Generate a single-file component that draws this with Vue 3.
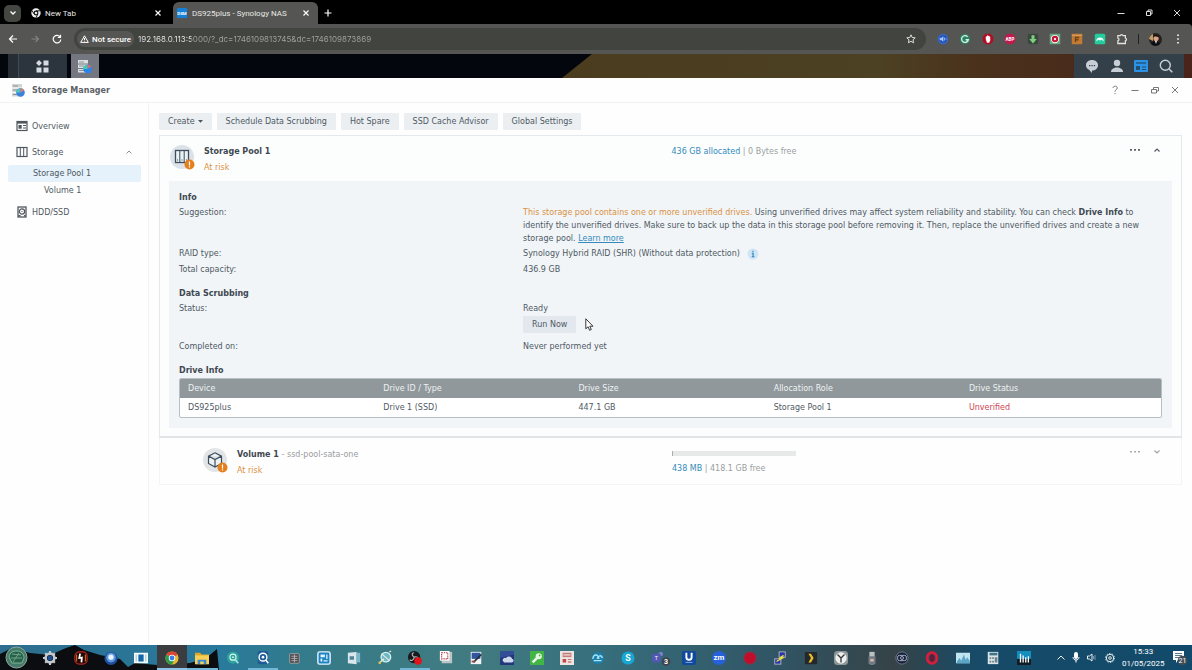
<script setup>
import { ref } from 'vue'

const url = ref('192.168.0.113:5000/?_dc=1746109813745&dc=1746109873869')

const tools = ['Schedule Data Scrubbing', 'Hot Spare', 'SSD Cache Advisor', 'Global Settings']
const columns = ['Device', 'Drive ID / Type', 'Drive Size', 'Allocation Role', 'Drive Status']

const extensions = [
  { name: 'Assistant', art: '<circle cx="8" cy="8" r="7" fill="#3565c9"/><circle cx="8" cy="8" r="5" fill="#2450b4"/><path d="M4 7h2l2-2v6L6 9H4zM10 6v4M12 7v2" fill="#a9c9ff" stroke="#a9c9ff" stroke-width="1"/>' },
  { name: 'Grammar', art: '<circle cx="8" cy="8" r="7" fill="#2f8263"/><path d="M11.500 5.200A4.500 4.500 0 1 0 12.400 9H8.800" fill="none" stroke="#d8efe5" stroke-width="1.700"/>' },
  { name: 'Blocker', art: '<path d="M5 1h6l4 4v6l-4 4H5l-4-4V5z" fill="#b30d25"/><path d="M5 8V5h1V4h1V3h1.300v1H10v1h1v5l-1.500 3h-3z" fill="#fff"/>' },
  { name: 'ABP', art: '<path d="M5 1h6l4 4v6l-4 4H5l-4-4V5z" fill="#c21a4c"/><text x="8" y="10.400" font-size="6" font-weight="700" text-anchor="middle" fill="#fff">ABP</text>' },
  { name: 'Downloader', art: '<rect x="1" y="1" width="14" height="14" rx="3" fill="#39473f"/><path d="M6 3h4v5h3l-5 6-5-6h3z" fill="#7fd07c"/>' },
  { name: 'Recorder', art: '<rect x="1" y="1" width="14" height="14" fill="#68a885"/><circle cx="8" cy="8" r="5.500" fill="#fff"/><circle cx="8" cy="8" r="4.300" fill="#c4173a"/><circle cx="8" cy="8" r="1.500" fill="#fff"/>' },
  { name: 'Notes', art: '<rect x="1" y="1" width="14" height="14" rx="1" fill="#c27b32"/><path d="M1 3h14" stroke="#e4ae72"/><path d="M6 12V6h5M6 9h4" stroke="#70411a" stroke-width="1.800" fill="none"/>' },
  { name: 'VPN', art: '<rect x="1" y="1" width="14" height="14" rx="2" fill="#23cda0"/><path d="M3 11a5 5 0 0 1 10 0l-3-2-2 1-2-1z" fill="#e9fff7"/>' },
  { name: 'Extensions', art: '<path d="M2.500 3.500h3.200a1.900 1.900 0 0 1 3.700 0h3.100v3.300a1.900 1.900 0 0 1 0 3.700v3.500h-10v-3.500a1.900 1.900 0 0 0 0-3.700z" fill="none" stroke="#e3e3e0" stroke-width="1.700"/>' }
]

const apps = [
  { name: 'Settings', art: '<circle cx="8" cy="8" r="5" fill="none" stroke="#c4c9cf" stroke-width="3"/><path d="M8 0v3M8 13v3M0 8h3M13 8h3M2.500 2.500l2 2M11.500 11.500l2 2M2.500 13.500l2-2M11.500 4.500l2-2" stroke="#c4c9cf" stroke-width="2.400"/><circle cx="8" cy="8" r="3" fill="#1d4f91"/>' },
  { name: 'Nero', art: '<rect x="1" y="1" width="14" height="14" rx="5" fill="#250808" stroke="#b3261d" stroke-width="1.500"/><path d="M7 3L6 8l3-.5L8.500 13" stroke="#fff" stroke-width="2" fill="none"/><path d="M3 4v8M13 4v8" stroke="#e08b26"/>' },
  { name: 'Player', art: '<circle cx="8" cy="8.500" r="7.500" fill="#1d4f9b"/><circle cx="8" cy="7.500" r="5.500" fill="#5d97dd"/><circle cx="8" cy="7" r="3" fill="#e9f4ff"/>' },
  { name: 'Task view', art: '<rect x="0" y="2" width="16" height="12" fill="#f3f8fb"/><rect x="5" y="4" width="6" height="8" fill="#1167a7"/><path d="M2.500 4v8M13.500 4v8" stroke="#8fb8cf"/>' },
  { name: 'Chrome', state: 'focused', art: '<circle cx="8" cy="8" r="7.500" fill="#e9b82c"/><path d="M8 8L1.500 4.200A7.500 7.500 0 0 1 14.500 4.200z" fill="#dd4437"/><path d="M8 8L1.500 4.200A7.500 7.500 0 0 0 8 15.500L11 9.700z" fill="#2b9c4d"/><circle cx="8" cy="8" r="3.700" fill="#fff"/><circle cx="8" cy="8" r="2.800" fill="#3b7fe8"/>' },
  { name: 'File Explorer', state: 'running', art: '<path d="M0 2h6l1.500 2H16v11H0z" fill="#e0a526"/><path d="M0 5h16v10H0z" fill="#f6cf57"/><path d="M3 10h10v5H3z" fill="#3a88cf"/><path d="M6 12h4v3H6z" fill="#f6cf57"/>' },
  { name: 'Finder', art: '<circle cx="8" cy="7.500" r="7" fill="#2da39c"/><circle cx="8" cy="7" r="3.500" fill="none" stroke="#d9f6f0" stroke-width="1.300"/><path d="M10 9l4 5" stroke="#9de3db" stroke-width="2"/><circle cx="8" cy="7" r="1" fill="#d9f6f0"/>' },
  { name: 'Disk search', state: 'running', art: '<rect x="2" y="0" width="12" height="15" rx="2" fill="#1e5c97"/><circle cx="8" cy="7" r="4.500" fill="#1e5c97" stroke="#fff" stroke-width="1.600"/><circle cx="8" cy="7" r="1.500" fill="#fff"/><path d="M11 10l3 4" stroke="#fff" stroke-width="1.600"/>' },
  { name: 'Archive', art: '<rect x="3" y="3" width="11" height="11" rx="1" fill="#4c4a4e" stroke="#a5a5a5"/><path d="M5 6h7M5 8.500h7M5 11h7M8.500 4v9" stroke="#bdb7b5"/>' },
  { name: 'Layout', art: '<rect x="1" y="1" width="14" height="14" rx="2" fill="#1d83c1" stroke="#e8f5ff" stroke-width="1.600"/><path d="M4 4h5v3H4zM10.500 4H12v5h-1.500zM4 8.500h2V12H4zM7.500 10.500H12V12H7.500z" fill="#dff2ff"/>' },
  { name: 'Mail', art: '<path d="M1 2l10-1v14L1 14z" fill="#d9e6ea"/><path d="M11 2h4v11h-4z" fill="#79b6cc"/><path d="M3 6h5v4H3z" fill="#4d8299"/>' },
  { name: 'Sync', art: '<circle cx="9" cy="7" r="5.500" fill="#6bb7c9" stroke="#d5eef1" stroke-width="1.500"/><path d="M1 14l6-5M13 1l2-1M4 3l9 8" stroke="#e8ead3" stroke-width="1.500"/><circle cx="2" cy="13.500" r="1.500" fill="#dac247"/>' },
  { name: 'OBS Studio', state: 'running', art: '<circle cx="7" cy="7" r="7" fill="#17191c"/><path d="M7 7C4 5 4 2 7 2M7 7c3-1 5 0 5 3M7 7c0 3-3 5-5 3" stroke="#b7babd" stroke-width="1.300" fill="none"/><circle cx="11.500" cy="11.500" r="4.300" fill="#e3141a"/>' },
  { name: 'Snipping tool', art: '<rect x="3" y="1" width="12" height="13" fill="#bcc4c7"/><rect x="1" y="0" width="11" height="11" fill="#fff"/><rect x="3" y="2" width="7" height="7" fill="none" stroke="#b53540" stroke-width="1.300" stroke-dasharray="1.500 1"/>' },
  { name: 'Editor', art: '<rect x="2" y="1" width="12" height="14" fill="#f1f3f7"/><rect x="3" y="2" width="10" height="7" fill="#31569e"/><path d="M5 13l9-9" stroke="#272a37" stroke-width="2"/><path d="M3 12h4" stroke="#9b4949" stroke-width="2"/>' },
  { name: 'Cloud drive', art: '<rect x="0" y="0" width="16" height="16" fill="#334d96"/><path d="M0 16V8l16-4v12z" fill="#24377a"/><path d="M3 11a3 3 0 0 1 4-3 4 4 0 0 1 7 1 2 2 0 0 1-1 4H5z" fill="#ccd8ec"/>' },
  { name: 'Keys', art: '<rect x="0" y="0" width="16" height="16" fill="#42b545"/><circle cx="10" cy="6" r="3.500" fill="#e7f5e6"/><path d="M3 13l6-6" stroke="#e7f5e6" stroke-width="3"/><circle cx="11" cy="5" r="1" fill="#42b545"/>' },
  { name: 'Calendar', art: '<rect x="0" y="0" width="16" height="16" fill="#eee4e2"/><path d="M3 2h10v5H3z" fill="#c37e7b"/><path d="M3 9h4v4H3zM9 9h4v1H9zM9 12h4v1H9z" fill="#bd4948"/><path d="M4 4.500h8" stroke="#fff"/>' },
  { name: 'Link', art: '<circle cx="8" cy="8" r="7" fill="#1c7fac"/><path d="M2 9c1-6 6-6 7 0M7 9c1-4 5-5 6-1M3 11h9" stroke="#a8e4fa" fill="none" stroke-width="1.600"/>' },
  { name: 'Skype', art: '<circle cx="8" cy="8" r="7.500" fill="#16a7d2"/><text x="8" y="11.500" font-size="10" font-weight="700" text-anchor="middle" fill="#fff">S</text>' },
  { name: 'Teams', art: '<circle cx="10" cy="3.500" r="2.500" fill="#8185d3"/><rect x="0" y="3" width="10" height="10" rx="1" fill="#5358b1"/><text x="5" y="10" font-size="6" text-anchor="middle" fill="#fff">T</text><circle cx="16" cy="12" r="5" fill="#3d444e"/><text x="16" y="15" font-size="8" font-weight="700" text-anchor="middle" fill="#fff">3</text>' },
  { name: 'UniFi', art: '<rect x="0" y="0" width="16" height="16" rx="2" fill="#114a9c"/><path d="M5 2v5a3 3 0 0 0 6 0V2" fill="none" stroke="#fff" stroke-width="2.200"/><path d="M4 13h8" stroke="#8eb5e8"/>' },
  { name: 'Zoom', art: '<circle cx="8" cy="8" r="8" fill="#2461da"/><text x="8" y="10.800" font-size="9" font-weight="700" text-anchor="middle" fill="#fff">zm</text>' },
  { name: 'Screen recorder', art: '<circle cx="8" cy="8" r="7" fill="#c00d2b" stroke="#8d3443"/>' },
  { name: 'PuTTY', art: '<rect x="7" y="1" width="7" height="6" fill="#2835a2" stroke="#b9bdca"/><rect x="2" y="9" width="7" height="6" fill="#2835a2" stroke="#b9bdca"/><path d="M12 5L8 8h3l-7 4" stroke="#efe044" stroke-width="1.500" fill="none"/>' },
  { name: 'Plex', art: '<rect x="1" y="1" width="14" height="14" rx="1" fill="#25282b"/><path d="M5 3h3l3 5-3 5H5l3-5z" fill="#e9bd25"/>' },
  { name: 'Clock', art: '<rect x="0" y="0" width="16" height="16" rx="4" fill="#8f9697"/><circle cx="8" cy="8" r="6.500" fill="#edefed"/><path d="M4 4l4 4 4-4M8 8v5" stroke="#343839" stroke-width="1.500" fill="none"/>' },
  { name: 'USB drive', art: '<path d="M5 1h6v6H5z" fill="#bbc0c3"/><path d="M4 6h8v8l-2 2H6l-2-2z" fill="#737b82"/><rect x="6" y="9" width="4" height="3" fill="#d6b5ae"/>' },
  { name: 'Camera', art: '<circle cx="8" cy="8" r="7" fill="#17223a" stroke="#747e91"/><rect x="3" y="5" width="10" height="6" rx="2" fill="none" stroke="#b4c0d3"/><circle cx="8" cy="8" r="1.700" fill="none" stroke="#b4c0d3"/>' },
  { name: 'Opera', art: '<ellipse cx="8" cy="8" rx="5.500" ry="6" fill="none" stroke="#d51e3c" stroke-width="3.300"/><ellipse cx="8" cy="8" rx="2.300" ry="4.500" fill="#641b36"/>' },
  { name: 'Monitor', art: '<rect x="0" y="2" width="16" height="12" fill="#c1e4f1"/><path d="M1 12l3-4 2 3 3-7 2 6 2-3 3 5v2H1z" fill="#5ba5c6"/>' },
  { name: 'Calculator', art: '<rect x="2" y="1" width="12" height="14" fill="#dae3e5"/><path d="M4 2h9v3H4z" fill="#427488"/><path d="M4 7h2v2H4zM7 7h2v2H7zM4 11h2v2H4zM7 11h2v2H7zM10 7h3v6h-3z" fill="#68838e"/>' },
  { name: 'Audio', art: '<rect x="0" y="0" width="16" height="16" fill="#158dbd"/><path d="M0 9h16v7H0z" fill="#111c24"/><path d="M4 3v10M7 5v8M10 7v6M13 6v7" stroke="#fff" stroke-width="1.500"/>' }
]
</script>

<template>
  <div class="screen">
    <header class="browser">
      <div class="tabs">
        <button class="tab-search" aria-label="Search tabs">
          <svg width="6" height="4" viewBox="0 0 6 4"><path d="M.5.5L3 3 5.500.5" fill="none" stroke="#fff" stroke-width="1.300" /></svg>
        </button>
        <div class="tab">
          <svg width="10" height="10" viewBox="0 0 16 16"><circle cx="8" cy="8" r="7.500" fill="#eee" /><circle cx="8" cy="8" r="3" fill="#eee" stroke="#111" stroke-width="1.800" /><path d="M8 4.500h7M5 9.500L1.500 4M11 9.500L8 15.500" stroke="#111" stroke-width="1.500" /></svg>
          <span class="tab-title">New Tab</span>
          <button aria-label="Close New Tab"><svg width="6" height="6" viewBox="0 0 6 6"><path d="M.5.5l5 5M5.500.5l-5 5" stroke="#fff" stroke-width="1.100" /></svg></button>
        </div>
        <div class="tab active">
          <svg width="10" height="10" viewBox="0 0 16 16"><rect width="16" height="16" rx="1" fill="#1580d8" /><text x="8" y="10.500" font-size="7" font-weight="700" text-anchor="middle" fill="#fff">DSM</text></svg>
          <span class="tab-title">DS925plus - Synology NAS</span>
          <button aria-label="Close DS925plus"><svg width="6" height="6" viewBox="0 0 6 6"><path d="M.5.5l5 5M5.500.5l-5 5" stroke="#fff" stroke-width="1.100" /></svg></button>
        </div>
        <button class="new-tab" aria-label="New tab"><svg width="8" height="8" viewBox="0 0 8 8"><path d="M4 .5v7M.5 4h7" stroke="#fff" stroke-width="1.200" /></svg></button>
        <div class="frame-controls">
          <button aria-label="Minimize"><svg width="8" height="8" viewBox="0 0 8 8"><path d="M.5 4.500h7" stroke="#ddd" /></svg></button>
          <button aria-label="Restore"><svg width="8" height="8" viewBox="0 0 8 8"><path d="M1.500 2.500h4v4h-4zM3 2.500V1h4v4H5.500" fill="none" stroke="#ddd" /></svg></button>
          <button aria-label="Close"><svg width="8" height="8" viewBox="0 0 8 8"><path d="M1 1l6 6M7 1L1 7" stroke="#ddd" /></svg></button>
        </div>
      </div>
      <div class="nav">
        <button aria-label="Back"><svg width="10" height="10" viewBox="0 0 10 10"><path d="M9 5H1.500M5 1.500L1.500 5 5 8.500" fill="none" stroke="#fff" stroke-width="1.200" /></svg></button>
        <button aria-label="Forward"><svg width="10" height="10" viewBox="0 0 10 10"><path d="M1.500 5h7M5.500 2L8.500 5l-3 3" fill="none" stroke="#858684" stroke-width="1.100" /></svg></button>
        <button aria-label="Reload"><svg width="10" height="10" viewBox="0 0 10 10"><path d="M8.300 3.200A3.800 3.800 0 1 0 8.800 5.500M8.500.8v2.700H5.800" fill="none" stroke="#fff" stroke-width="1.200" /></svg></button>
        <div class="address">
          <button class="insecure">
            <svg width="9" height="8" viewBox="0 0 9 8"><path d="M4.500.8L8.300 7.400H.7z" fill="none" stroke="#fff" /><path d="M4.500 3v2M4.500 5.700v.8" stroke="#fff" /></svg>
            Not secure
          </button>
          <input v-model="url" class="url" aria-label="Address" />
          <button class="star" aria-label="Bookmark"><svg width="10" height="10" viewBox="0 0 10 10"><path d="M5 .8l1.200 2.700 3 .3-2.200 2 .6 3L5 7.300 2.400 8.800l.6-3-2.200-2 3-.3z" fill="none" stroke="#ddd" /></svg></button>
        </div>
        <div class="extensions">
          <button v-for="e in extensions" :key="e.name" :aria-label="e.name"><svg width="12" height="12" viewBox="0 0 16 16" v-html="e.art"></svg></button>
        </div>
        <i class="divider"></i>
        <button class="avatar" aria-label="Profile"><svg width="13" height="13" viewBox="0 0 13 13"><circle cx="6.500" cy="6.500" r="6.500" fill="#27211d" /><path d="M0 6a6.500 6.500 0 0 1 4-5v7z" fill="#c09a6b" /><circle cx="7" cy="5.500" r="2.600" fill="#d9a586" /><path d="M2 11c3-4 7-4 9 0a6.500 6.500 0 0 1-9 0z" fill="#0c0d12" /><path d="M4 3c2-2 5-1 6 1z" fill="#17100e" /><path d="M6 8l1 3 1-3z" fill="#eee" /></svg></button>
        <button class="kebab" aria-label="Menu"><svg width="4" height="10" viewBox="0 0 4 10"><path d="M1.200.5h1.600v1.600H1.200zM1.200 4.200h1.600v1.600H1.200zM1.200 7.900h1.600v1.600H1.200z" fill="#fff" /></svg></button>
      </div>
    </header>

    <div class="dsm-bar">
      <svg class="wallpaper" viewBox="0 0 1192 24" preserveAspectRatio="none">
        <defs><linearGradient id="dusk"><stop offset="0" stop-color="#4b3c1e" /><stop offset=".5" stop-color="#4c4123" /><stop offset=".65" stop-color="#4a321c" /><stop offset="1" stop-color="#49231a" /></linearGradient></defs>
        <path d="M0 0h1192v24H0z" fill="#04060d" /><path d="M592 0h600v24H562z" fill="url(#dusk)" />
      </svg>
      <button class="main-menu" aria-label="Main Menu"><svg width="13" height="13" viewBox="0 0 13 13"><path d="M3 0l3 3-3 3-3-3zM7.500.5h5v5h-5zM.5 7.500h5v5h-5zM7.500 7.500h5v5h-5z" fill="#d6dbe2" /></svg></button>
      <button class="open-app" aria-label="Storage Manager">
        <svg width="14" height="15" viewBox="0 0 14 15"><path d="M0 1h10v3.500H0zM0 5.500h10V9H0zM0 10h10v3.500H0z" fill="#dce0e2" /><path d="M1 3h5M1 7h5M1 11.500h5" stroke="#8c9296" /><circle cx="9.500" cy="10" r="4.300" fill="#2786ec" /><path d="M9.500 10V5.700A4.300 4.300 0 0 0 5.200 10z" fill="#3ecdb1" /><path d="M9.500 10V5.700a4.300 4.300 0 0 1 3.700 2z" fill="#d96a7a" /></svg>
      </button>
      <div class="dsm-tray">
        <button aria-label="Chat"><svg width="14" height="14" viewBox="0 0 14 14"><path d="M7 1c3.500 0 6 2.200 6 5.200S10.500 11.500 7 11.500L7 14l-3-3.200C2.200 10 1 8.300 1 6.200 1 3.200 3.500 1 7 1z" fill="#c8ced5" /><path d="M4 6h1.300v1.300H4zM6.400 6h1.300v1.300H6.400zM8.800 6h1.300v1.300H8.800z" fill="#33404b" /></svg></button>
        <button aria-label="User"><svg width="14" height="14" viewBox="0 0 14 14"><circle cx="7" cy="4" r="3.200" fill="#c8ced5" /><path d="M1 13c0-6 12-6 12 0z" fill="#c8ced5" /></svg></button>
        <button aria-label="Widgets"><svg width="14" height="14" viewBox="0 0 14 14"><rect y="1" width="14" height="12" rx="1" fill="#2a93e8" /><path d="M2 4h10" stroke="#23506f" stroke-width="1.300" /><path d="M2 7h4v4H2zM8 7.500h4v1H8zM8 10h4v1H8z" fill="#23506f" /></svg></button>
        <button aria-label="Search"><svg width="14" height="14" viewBox="0 0 14 14"><circle cx="6.300" cy="6.300" r="5" fill="none" stroke="#c8ced5" stroke-width="1.400" /><path d="M10 10l3.300 3.300" stroke="#c8ced5" stroke-width="1.500" /></svg></button>
      </div>
    </div>

    <section class="window">
      <header class="titlebar">
        <svg width="14" height="15" viewBox="0 0 14 15"><path d="M1 1h10v3.500H1zM1 5.500h10V9H1zM1 10h10v3.500H1z" fill="#d0d4d5" /><path d="M2 3h5M2 7h5M2 11.500h5" stroke="#8c9296" /><circle cx="9.500" cy="9.500" r="4.300" fill="#3b82df" /><path d="M9.500 9.500V5.200a4.300 4.300 0 0 0-4.300 4.300z" fill="#48c8c0" /><path d="M9.500 9.500V5.200a4.300 4.300 0 0 1 3.700 2z" fill="#e0796e" /></svg>
        <h1>Storage Manager</h1>
        <div class="window-controls">
          <button aria-label="Help"><svg width="8" height="10" viewBox="0 0 8 10"><path d="M2 3c0-2.500 4.300-2.300 4.300 0C6.300 4.700 4 4.500 4 6.700M4 8v1.200" fill="none" stroke="#777" /></svg></button>
          <button aria-label="Minimize"><svg width="8" height="10" viewBox="0 0 8 10"><path d="M.5 5.500h7" stroke="#777" /></svg></button>
          <button aria-label="Restore"><svg width="8" height="10" viewBox="0 0 8 10"><path d="M.5 4.500h5v3.500h-5zM2.500 4.500v-2h5V6h-2" fill="none" stroke="#777" /></svg></button>
          <button aria-label="Close"><svg width="8" height="10" viewBox="0 0 8 10"><path d="M1 2l6 6M7 2L1 8" stroke="#777" /></svg></button>
        </div>
      </header>

      <div class="body">
        <nav class="sidebar">
          <a href="#overview" class="top"><svg width="12" height="12" viewBox="0 0 12 12"><rect x="1" y="1.500" width="10" height="9" fill="none" stroke="#4f565e" stroke-width="1.200" /><path d="M1 2.700h10" stroke="#4f565e" stroke-width="1.800" /><path d="M2.500 5h3.200v3.700H2.500z" fill="#4f565e" /><path d="M7 5.500h3M7 8h3" stroke="#4f565e" /></svg>Overview</a>
          <a href="#storage" class="top"><svg width="12" height="12" viewBox="0 0 12 12"><rect x="1" y="1.500" width="10" height="9" fill="none" stroke="#4f565e" stroke-width="1.200" /><path d="M4.300 2v8M7.700 2v8" stroke="#4f565e" /></svg>Storage<svg class="caret" width="6" height="4" viewBox="0 0 6 4"><path d="M.5 3.500L3 1l2.500 2.500" fill="none" stroke="#8b9297" /></svg></a>
          <a href="#pool" class="sub selected">Storage Pool 1</a>
          <a href="#volume" class="sub nested">Volume 1</a>
          <a href="#hdd" class="top"><svg width="12" height="12" viewBox="0 0 12 12"><rect x="2" y="1" width="8" height="10" fill="none" stroke="#4f565e" stroke-width="1.300" /><circle cx="6" cy="5.500" r="2.600" fill="none" stroke="#4f565e" stroke-width="1.200" /><path d="M5.500 5h1v1h-1zM2.500 9h2v1.500h-2zM8 9h1.500v1.500H8z" fill="#4f565e" /></svg>HDD/SSD</a>
        </nav>

        <main class="main">
          <div class="toolbar">
            <button>Create <svg width="5" height="3" viewBox="0 0 5 3"><path d="M0 0h5L2.500 2.800z" fill="#4d5660" /></svg></button>
            <button v-for="t in tools" :key="t">{{ t }}</button>
          </div>

          <article class="card pool">
            <div class="card-head">
              <div class="identity">
                <svg class="badge" width="26" height="26" viewBox="0 0 26 26"><circle cx="12" cy="12" r="12" fill="#dce2e7" /><rect x="5.500" y="5.500" width="13" height="12" fill="#eaf2f6" stroke="#3d4d5c" stroke-width="1.300" /><path d="M9.800 6v11M14.200 6v11" stroke="#3d4d5c" /><path d="M7 15h1M11.500 15h1M16 15h1" stroke="#3d4d5c" /><circle cx="19.500" cy="19.500" r="5" fill="#e57f1c" /><path d="M19.500 16.500v4M19.500 21.300v1.200" stroke="#fff" stroke-width="1.200" /></svg>
                <div><h2>Storage Pool 1</h2><p class="warn">At risk</p></div>
              </div>
              <p class="usage"><span class="used">436 GB allocated</span> | 0 Bytes free</p>
              <div class="actions">
                <button aria-label="More"><svg width="10" height="4" viewBox="0 0 10 4"><path d="M0 1h2v1.700H0zM4 1h2v1.700H4zM8 1h2v1.700H8z" fill="#59616a" /></svg></button>
                <button aria-label="Collapse"><svg width="6" height="4" viewBox="0 0 6 4"><path d="M.5 3.500L3 1l2.500 2.500" fill="none" stroke="#535d65" stroke-width="1.200" /></svg></button>
              </div>
            </div>

            <div class="details">
              <h3>Info</h3>
              <dl>
                <dt>Suggestion:</dt>
                <dd class="suggestion"><span class="warn">This storage pool contains one or more unverified drives.</span> Using unverified drives may affect system reliability and stability. You can check <b>Drive Info</b> to identify the unverified drives. Make sure to back up the data in this storage pool before removing it. Then, replace the unverified drives and create a new storage pool. <a href="#learn">Learn more</a></dd>
                <dt>RAID type:</dt>
                <dd class="raid">Synology Hybrid RAID (SHR) (Without data protection)<svg width="12" height="12" viewBox="0 0 12 12"><circle cx="6" cy="6" r="5.500" fill="#cfe5f6" /><path d="M6 2.800v1.300M4.800 5.300h1.300v3.200M4.700 8.700h2.700" fill="none" stroke="#2b7fb8" stroke-width="1.100" /></svg></dd>
                <dt>Total capacity:</dt>
                <dd>436.9 GB</dd>
              </dl>
              <h3 class="spaced">Data Scrubbing</h3>
              <dl>
                <dt>Status:</dt>
                <dd>Ready</dd>
                <dt></dt>
                <dd class="run"><button>Run Now</button><svg class="cursor" width="9" height="13" viewBox="0 0 9 13"><path d="M.8.8v10l2.300-2 1.500 3.500 1.700-.8L4.800 8.200H8z" fill="#fff" stroke="#222" stroke-width=".9" /></svg></dd>
                <dt>Completed on:</dt>
                <dd>Never performed yet</dd>
              </dl>
              <h3 class="spaced">Drive Info</h3>
              <div class="table-frame">
                <table>
                  <thead><tr><th v-for="c in columns" :key="c">{{ c }}</th></tr></thead>
                  <tbody><tr><td>DS925plus</td><td>Drive 1 (SSD)</td><td>447.1 GB</td><td>Storage Pool 1</td><td class="bad">Unverified</td></tr></tbody>
                </table>
              </div>
            </div>
          </article>

          <article class="card volume">
            <div class="card-head">
              <div class="identity">
                <svg class="badge" width="26" height="26" viewBox="0 0 26 26"><circle cx="12" cy="12" r="12" fill="#e2e5e7" /><path d="M12 4.800l6.500 3.300v7.400L12 19l-6.500-3.500V8.100zM5.500 8.100l6.500 3.400 6.500-3.400M12 11.500V19" fill="#edf2f4" stroke="#3d4d5c" stroke-width="1.200" /><circle cx="19.500" cy="19.500" r="5" fill="#e57f1c" /><path d="M19.500 16.500v4M19.500 21.300v1.200" stroke="#fff" stroke-width="1.200" /></svg>
                <div><h2>Volume 1 <span>- ssd-pool-sata-one</span></h2><p class="warn">At risk</p></div>
              </div>
              <div class="usage">
                <div class="meter"><i></i></div>
                <p><span class="used">438 MB</span> | 418.1 GB free</p>
              </div>
              <div class="actions">
                <button aria-label="More"><svg width="10" height="4" viewBox="0 0 10 4"><path d="M0 1h2v1.500H0zM4 1h2v1.500H4zM8 1h2v1.500H8z" fill="#a8abad" /></svg></button>
                <button aria-label="Expand"><svg width="6" height="4" viewBox="0 0 6 4"><path d="M.5.5L3 3 5.500.5" fill="none" stroke="#a0a4a6" stroke-width="1.200" /></svg></button>
              </div>
            </div>
          </article>
        </main>
      </div>
    </section>

    <footer class="taskbar">
      <svg class="wallpaper" viewBox="0 0 1192 25" preserveAspectRatio="none">
        <defs><linearGradient id="sea"><stop offset="0" stop-color="#2d6d8d" /><stop offset=".18" stop-color="#287a9d" /><stop offset=".27" stop-color="#367b88" /><stop offset=".4" stop-color="#417b80" /><stop offset=".5" stop-color="#376f7d" /><stop offset=".65" stop-color="#315565" /><stop offset=".75" stop-color="#354347" /><stop offset=".82" stop-color="#174b68" /><stop offset="1" stop-color="#124a6b" /></linearGradient></defs>
        <path d="M0 0h1192v25H0z" fill="url(#sea)" />
        <path d="M0 9l12-6 18 5 20 2 16-7 9-3 9 5 16 5 20 4 8 8 7-4 22 2 33-2 15-4 12-10 2 21H0z" fill="#0b0d10" />
      </svg>
      <button class="start" aria-label="Start"><svg width="23" height="23" viewBox="0 0 23 23"><circle cx="11.500" cy="11.500" r="10.500" fill="#477a69" stroke="#89a99f" /><path d="M4 11c1-5 4-6 8-6s7 3 7 7l-2 5H7z" fill="#28624f" stroke="#7cb593" /><path d="M7 8l9 1M6 12h11M8 16l6-9" stroke="#6fa583" /></svg></button>
      <div class="apps">
        <button v-for="a in apps" :key="a.name" :aria-label="a.name" :class="a.state"><svg width="14" height="14" viewBox="0 0 16 16" v-html="a.art"></svg></button>
      </div>
      <div class="tray">
        <button aria-label="Hidden icons"><svg width="8" height="5" viewBox="0 0 8 5"><path d="M.5 4.500L4 1l3.500 3.500" fill="none" stroke="#eee" /></svg></button>
        <button aria-label="Microphone"><svg width="8" height="11" viewBox="0 0 8 11"><rect x="2" width="4" height="7" rx="2" fill="#fff" /><path d="M1 5c0 4 6 4 6 0M4 8v2.500" fill="none" stroke="#fff" /></svg></button>
        <button aria-label="Volume"><svg width="9" height="9" viewBox="0 0 9 9"><path d="M.5 3h2L5 1v7L2.500 6h-2z" fill="none" stroke="#fff" stroke-width=".9" /><path d="M6.500 3v3M8 2v5" stroke="#91a9b6" stroke-width=".8" /></svg></button>
        <button class="gear" aria-label="Quick settings"><svg width="10" height="10" viewBox="0 0 10 10"><circle cx="5" cy="5" r="3.700" fill="none" stroke="#e5ece8" /><circle cx="5" cy="5" r="1.300" fill="none" stroke="#e5ece8" /><circle cx="5" cy="5" r="4.500" fill="none" stroke="#e5ece8" stroke-width=".9" stroke-dasharray="1.400 1.400" /></svg></button>
        <time>15:33<br />01/05/2025</time>
        <button class="notes" aria-label="Notifications"><svg width="16" height="16" viewBox="0 0 16 16"><path d="M1 1h11v9H6l-2 3v-3H1z" fill="#fff" /><path d="M3 3.500h7M3 5.500h7M3 7.500h4" stroke="#31566a" stroke-width=".8" /><circle cx="10.500" cy="10.500" r="4.800" fill="#424c54" /><text x="10.500" y="13" font-size="7" text-anchor="middle" fill="#fff">21</text></svg></button>
      </div>
    </footer>
  </div>
</template>

<style>
body { margin: 0; background: #fefefe; }
</style>

<style scoped>
* { box-sizing: border-box; }
.screen { display: flex; flex-direction: column; height: 100vh; font-family: "DejaVu Sans", sans-serif; font-size: 8px; line-height: 13px; color: #4f5963; overflow: hidden; }
button, input { font: inherit; color: inherit; border: 0; padding: 0; background: none; }
button { display: flex; align-items: center; justify-content: center; flex-shrink: 0; }
svg { display: block; flex-shrink: 0; }
h1, h2, h3, p, dl, dd { margin: 0; font-size: 8px; }
a { color: inherit; text-decoration: none; }

.browser { font-family: Roboto, sans-serif; color: #e8e8e6; background: #000; }
.tabs { display: flex; align-items: center; height: 24px; padding: 2px 4px 0 4px; }
.tab-search { width: 17px; height: 17px; border-radius: 5px; background: #444642; }
.tab { display: flex; align-items: center; gap: 4px; width: 144px; height: 22px; margin-left: 2px; padding: 0 6px 0 8px; }
.tab.active { width: 145px; margin-left: 6px; padding: 0 9px 0 4px; gap: 5px; border-radius: 6px 6px 0 0; background: #555653; }
.tab-title { flex: 1; white-space: nowrap; }
.new-tab { margin-left: 4px; width: 12px; height: 18px; }
.frame-controls { display: flex; gap: 20px; margin-left: auto; padding-right: 7px; }
.nav { display: flex; align-items: center; height: 30px; padding: 0 8px; background: #555653; border-radius: 0 4px 0 0; }
.nav > button:nth-child(-n+3) { width: 10px; height: 20px; margin-right: 12px; }
.address { flex: 1; display: flex; align-items: center; height: 22px; padding: 0 10px 0 3px; border-radius: 11px; background: #424440; }
.insecure { gap: 3px; width: 57px; height: 16px; border-radius: 8px; background: #555653; color: #fff; font-weight: 500; }
.url { flex: 1; min-width: 0; height: 16px; margin-left: 4px; font-family: Inter, sans-serif; color: transparent; background: linear-gradient(90deg, #eee 53px, #a4a5a2 53px); background-clip: text; -webkit-background-clip: text; }
.extensions { display: flex; justify-content: space-between; width: 191px; margin-left: 11px; }
.divider { width: 1px; height: 10px; margin: 0 10px; background: #222; }
.avatar { width: 13px; }
.kebab { width: 4px; margin-left: 14px; margin-right: 4px; }

.dsm-bar { position: relative; display: flex; gap: 4px; height: 24px; padding: 0 8px; flex-shrink: 0; }
.wallpaper { position: absolute; inset: 0; width: 100%; height: 100%; }
.dsm-bar > button, .dsm-tray { position: relative; height: 24px; }
.main-menu { width: 59px; padding-left: 10px; background: linear-gradient(90deg, #272d35 10px, #424b55 10px, #424b55 11px, #2c343e 11px); }
.open-app { width: 28px; background: #747780; }
.dsm-tray { display: flex; align-items: center; justify-content: space-between; width: 110px; margin-left: auto; padding: 0 11px; background: #33404a; }

.window { flex: 1; min-height: 0; display: flex; flex-direction: column; background: #fefefe; }
.titlebar { display: flex; align-items: center; gap: 7px; height: 25px; padding: 0 13px 0 11px; border-bottom: 1px solid #f0f1f1; }
.titlebar h1 { color: #5c6166; }
.window-controls { display: flex; gap: 12px; margin-left: auto; }
.body { flex: 1; min-height: 0; display: flex; }
.sidebar { width: 149px; flex-shrink: 0; padding: 10px 7px 10px 8px; border-right: 1px solid #f2f3f3; }
.sidebar a { display: flex; align-items: center; border-radius: 2px; }
.sidebar .top { height: 26px; gap: 4px; padding: 0 9px 0 8px; }
.sidebar .caret { margin-left: auto; }
.sidebar .sub { height: 17px; padding-left: 25px; }
.sidebar .nested { padding-left: 36px; }
.sidebar .selected { background: #e5f1fb; }
.main { flex: 1; min-width: 0; padding: 10px 10px 0; }

.toolbar { display: flex; gap: 5px; margin-bottom: 5px; }
.toolbar button { height: 17px; padding: 0 9px; gap: 3px; border-radius: 1px; background: #ebeff2; }
.card { border: 1px solid #e3e9ed; }
.card-head { position: relative; display: grid; grid-template-columns: 1fr 1fr; }
.identity { display: flex; gap: 8px; }
h2, h3, b { color: #3f4851; font-weight: 700; }
h2 span { color: #9a9da0; font-weight: 400; }
.warn { color: #db9143; }
.usage { color: #9a9ea1; }
.used { color: #348bbb; }
.actions { position: absolute; right: 21px; top: 8px; display: flex; gap: 14px; }
.actions button { height: 12px; }
.pool { padding-bottom: 8px; background: #fcfefe; border-bottom: 2px solid #e1e5e8; }
.pool .card-head { height: 45px; padding: 9px 0 0 10px; grid-template-columns: calc(50% - 4px) 1fr; }
.identity p { margin-top: 3px; }
.volume .card-head { height: 46px; padding: 10px 0 0 43px; grid-template-columns: calc(50% - 20px) 1fr; }
.volume { border-color: #f3f4f4; border-top: 0; }
.volume .meter { width: 124px; height: 5px; margin: 3px 0 6px; background: #e7e8e8; }
.volume .meter i { display: block; width: 1px; height: 5px; background: #a9adb0; }

.details { margin: 0 9px; padding: 10px; background: #f1f5f8; }
h3.spaced { margin-top: 10px; }
dl { display: grid; grid-template-columns: 35% 1fr; }
dt, dd { padding: 2px 0 1px; }
dd.suggestion { padding-bottom: 0; }
dd a { color: #348bbb; text-decoration: underline; }
.raid { display: flex; align-items: center; gap: 7px; }
dd.run { position: relative; padding: 0 0 5px; }
.run button { height: 17px; padding: 0 9px; border-radius: 1px; background: #e3e8ee; }
.cursor { position: absolute; left: 62px; top: 2px; }
.table-frame { margin-top: 1px; border: 1px solid #b6bfc5; border-radius: 2px; overflow: hidden; background: #fff; }
table { width: 100%; table-layout: fixed; border-collapse: collapse; }
th, td { padding: 0 8px; text-align: left; font-weight: 400; }
th:not(:last-child) { width: 19.9%; }
th { height: 19px; color: #eff2f3; background: #90989c; }
td { height: 19px; }
.bad { color: #cf4452; }

.taskbar { position: relative; display: flex; height: 25px; flex-shrink: 0; font-family: Roboto, sans-serif; color: #fff; }
.start, .apps, .tray { position: relative; }
.start { width: 35px; padding-right: 3px; }
.apps { flex: 1; display: flex; }
.apps button { flex: 1; border-bottom: 2px solid transparent; border-top: 2px solid transparent; }
.apps svg { overflow: visible; }
.apps .focused { background: #3b3c3f; border-bottom-color: #8fc3e7; border-top-color: #3b3c3f; }
.apps .running { border-bottom-color: #72b6d8; }
.tray { display: flex; align-items: center; gap: 7px; width: 153px; padding: 0 7px 0 18px; }
.tray .gear { margin-left: 2px; }
.tray time { flex: 1; text-align: center; line-height: 12px; }
</style>
